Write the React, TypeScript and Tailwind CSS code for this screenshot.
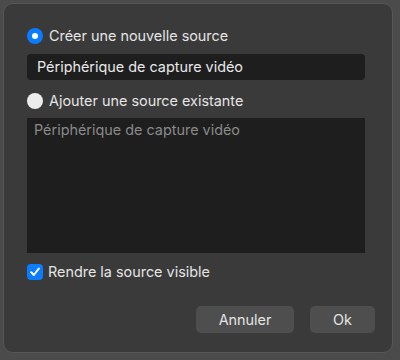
import React, { useState } from 'react';

const font = { fontFamily: 'Inter, "Noto Sans", "Liberation Sans", sans-serif' };

const Radio = ({ checked, label, onClick }: { checked: boolean; label: string; onClick: () => void }) => (
  <button onClick={onClick} className="flex h-[20px] items-center gap-[6px] text-left">
    {checked ? (
      <span className="flex h-[16px] w-[16px] items-center justify-center rounded-full bg-[#0a7cff]">
        <span className="h-[6px] w-[6px] rounded-full bg-white" />
      </span>
    ) : (
      <span className="h-[16px] w-[16px] rounded-full bg-[#ececec]" />
    )}
    <span className="text-[14.4px] text-[#e4e4e4]">{label}</span>
  </button>
);

export default function App() {
  const [mode, setMode] = useState<'new' | 'existing'>('new');
  const [visible, setVisible] = useState(true);

  return (
    <div className="flex h-[360px] w-[400px] bg-[#4b4b4b] pl-[3px] pt-[3px]" style={font}>
      <div className="flex h-[350px] w-[390px] flex-col rounded-[10px] border border-[#575757] bg-[#3a3a3a] pl-[23px] pr-[27px] pt-[22px]">
        <Radio checked={mode === 'new'} label="Créer une nouvelle source" onClick={() => setMode('new')} />

        <div className="mt-[8px] flex h-[26px] items-center rounded-[4px] bg-[#1e1e1e] px-[10px] text-[14.4px] text-[#e8e8e8]">
          Périphérique de capture vidéo
        </div>

        <div className="mt-[11px]">
          <Radio checked={mode === 'existing'} label="Ajouter une source existante" onClick={() => setMode('existing')} />
        </div>

        <div className="mt-[7px] h-[135px] bg-[#1e1e1e] px-[7px] pt-[1px] text-[14.4px] text-[#8a8a8a]">
          Périphérique de capture vidéo
        </div>

        <button onClick={() => setVisible(!visible)} className="mt-[9px] flex h-[20px] items-center gap-[5px] text-left">
          <span className="flex h-[16px] w-[16px] items-center justify-center rounded-[4px] bg-[#0a7cff]">
            {visible && (
              <svg width="12" height="12" viewBox="0 0 12 12" fill="none">
                <path d="M2.2 6.3 L4.8 9 L9.8 2.6" stroke="white" strokeWidth="2" strokeLinecap="round" strokeLinejoin="round" />
              </svg>
            )}
          </span>
          <span className="text-[14.4px] text-[#e4e4e4]">Rendre la source visible</span>
        </button>

        <div className="-mr-[10px] mt-[24px] flex justify-end gap-[16px]">
          <button className="h-[27px] w-[98px] rounded-[5px] bg-[#4e4e4e] text-[14.4px] text-[#e4e4e4]">Annuler</button>
          <button className="h-[27px] w-[65px] rounded-[5px] bg-[#4e4e4e] text-[14.4px] text-[#e4e4e4]">Ok</button>
        </div>
      </div>
    </div>
  );
}
